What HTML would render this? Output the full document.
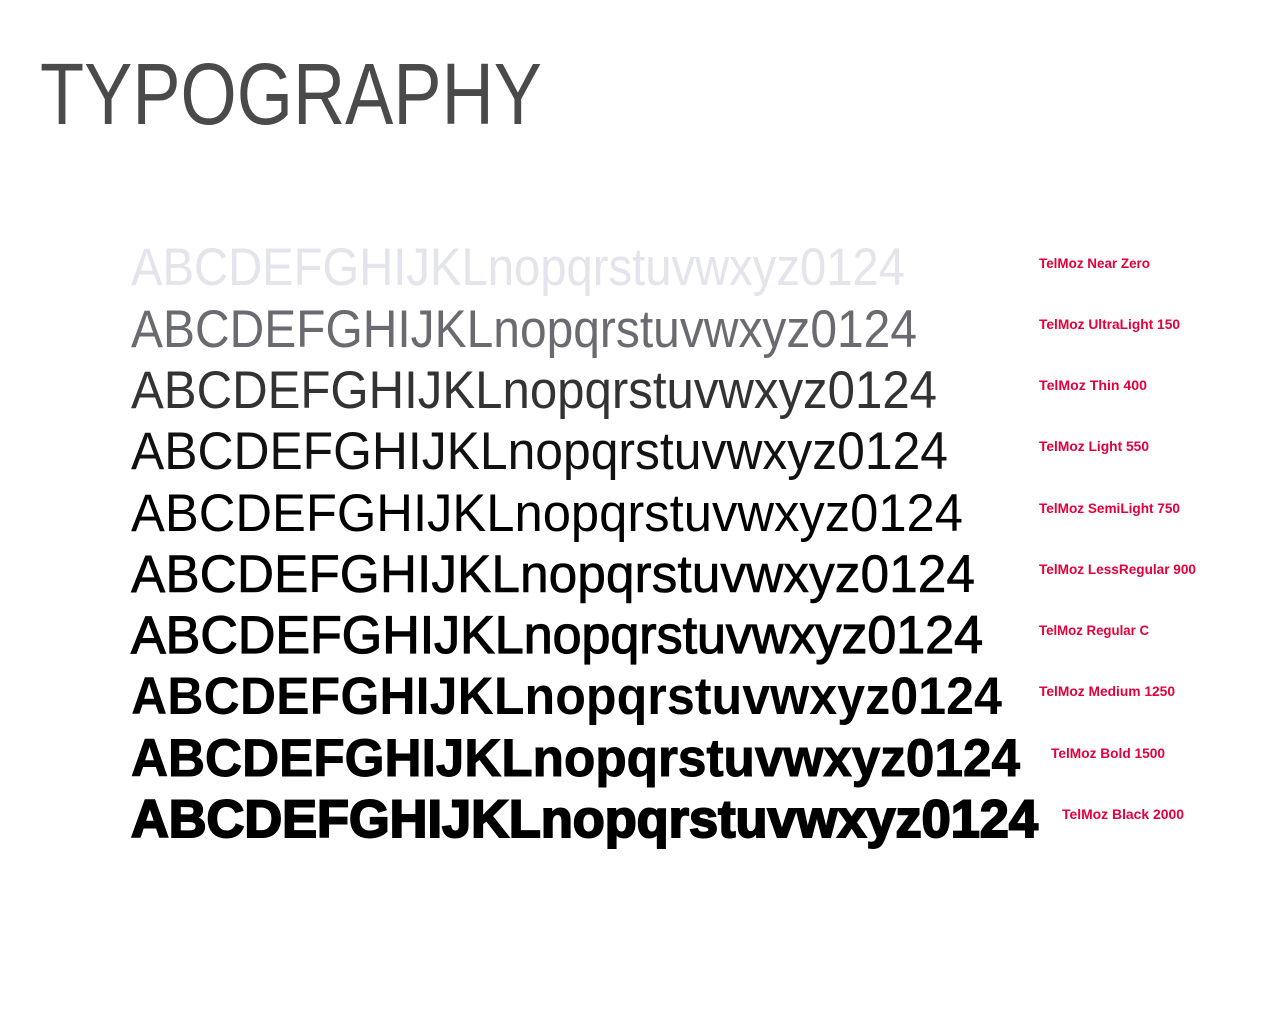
<!DOCTYPE html>
<html><head><meta charset="utf-8"><style>
html,body{margin:0;padding:0;background:#fff;width:1280px;height:1024px;overflow:hidden}
svg{display:block}
</style></head><body>
<svg width="1280" height="1024" xmlns="http://www.w3.org/2000/svg" font-family="Liberation Sans, sans-serif">
<text x="40" y="124" font-size="87" fill="#4a4a4a" textLength="502" lengthAdjust="spacingAndGlyphs">TYPOGRAPHY</text>
<g font-size="53">
<text x="131" y="285" fill="#e4e4ec" textLength="774" lengthAdjust="spacingAndGlyphs">ABCDEFGHIJKLnopqrstuvwxyz0124</text>
<text x="131" y="347" fill="#6a6a70" textLength="786" lengthAdjust="spacingAndGlyphs">ABCDEFGHIJKLnopqrstuvwxyz0124</text>
<text x="131" y="408" fill="#333" textLength="806" lengthAdjust="spacingAndGlyphs">ABCDEFGHIJKLnopqrstuvwxyz0124</text>
<text x="131" y="469" fill="#111" textLength="817" lengthAdjust="spacingAndGlyphs">ABCDEFGHIJKLnopqrstuvwxyz0124</text>
<text x="131" y="531" fill="#000" textLength="832" lengthAdjust="spacingAndGlyphs">ABCDEFGHIJKLnopqrstuvwxyz0124</text>
<text x="131" y="592" fill="#000" stroke="#000" stroke-width="0.6" textLength="844" lengthAdjust="spacingAndGlyphs">ABCDEFGHIJKLnopqrstuvwxyz0124</text>
<text x="131" y="653" fill="#000" stroke="#000" stroke-width="1.2" textLength="852" lengthAdjust="spacingAndGlyphs">ABCDEFGHIJKLnopqrstuvwxyz0124</text>
<text x="131" y="714" fill="#000" font-weight="bold" textLength="871" lengthAdjust="spacingAndGlyphs">ABCDEFGHIJKLnopqrstuvwxyz0124</text>
<text x="131" y="776" fill="#000" font-weight="bold" stroke="#000" stroke-width="1" textLength="889" lengthAdjust="spacingAndGlyphs">ABCDEFGHIJKLnopqrstuvwxyz0124</text>
<text x="131" y="837" fill="#000" font-weight="bold" stroke="#000" stroke-width="2" textLength="907" lengthAdjust="spacingAndGlyphs">ABCDEFGHIJKLnopqrstuvwxyz0124</text>
</g>
<g font-size="14" fill="#e4003a" font-weight="bold">
<text x="1039" y="268" textLength="111" lengthAdjust="spacingAndGlyphs">TelMoz Near Zero</text>
<text x="1039" y="329" textLength="141" lengthAdjust="spacingAndGlyphs">TelMoz UltraLight 150</text>
<text x="1039" y="390" textLength="108" lengthAdjust="spacingAndGlyphs">TelMoz Thin 400</text>
<text x="1039" y="451" textLength="110" lengthAdjust="spacingAndGlyphs">TelMoz Light 550</text>
<text x="1039" y="513" textLength="141" lengthAdjust="spacingAndGlyphs">TelMoz SemiLight 750</text>
<text x="1039" y="574" textLength="157" lengthAdjust="spacingAndGlyphs">TelMoz LessRegular 900</text>
<text x="1039" y="635" textLength="110" lengthAdjust="spacingAndGlyphs">TelMoz Regular C</text>
<text x="1039" y="696" textLength="136" lengthAdjust="spacingAndGlyphs">TelMoz Medium 1250</text>
<text x="1051" y="758" textLength="114" lengthAdjust="spacingAndGlyphs">TelMoz Bold 1500</text>
<text x="1062" y="819" textLength="122" lengthAdjust="spacingAndGlyphs">TelMoz Black 2000</text>
</g>
</svg>
</body></html>
